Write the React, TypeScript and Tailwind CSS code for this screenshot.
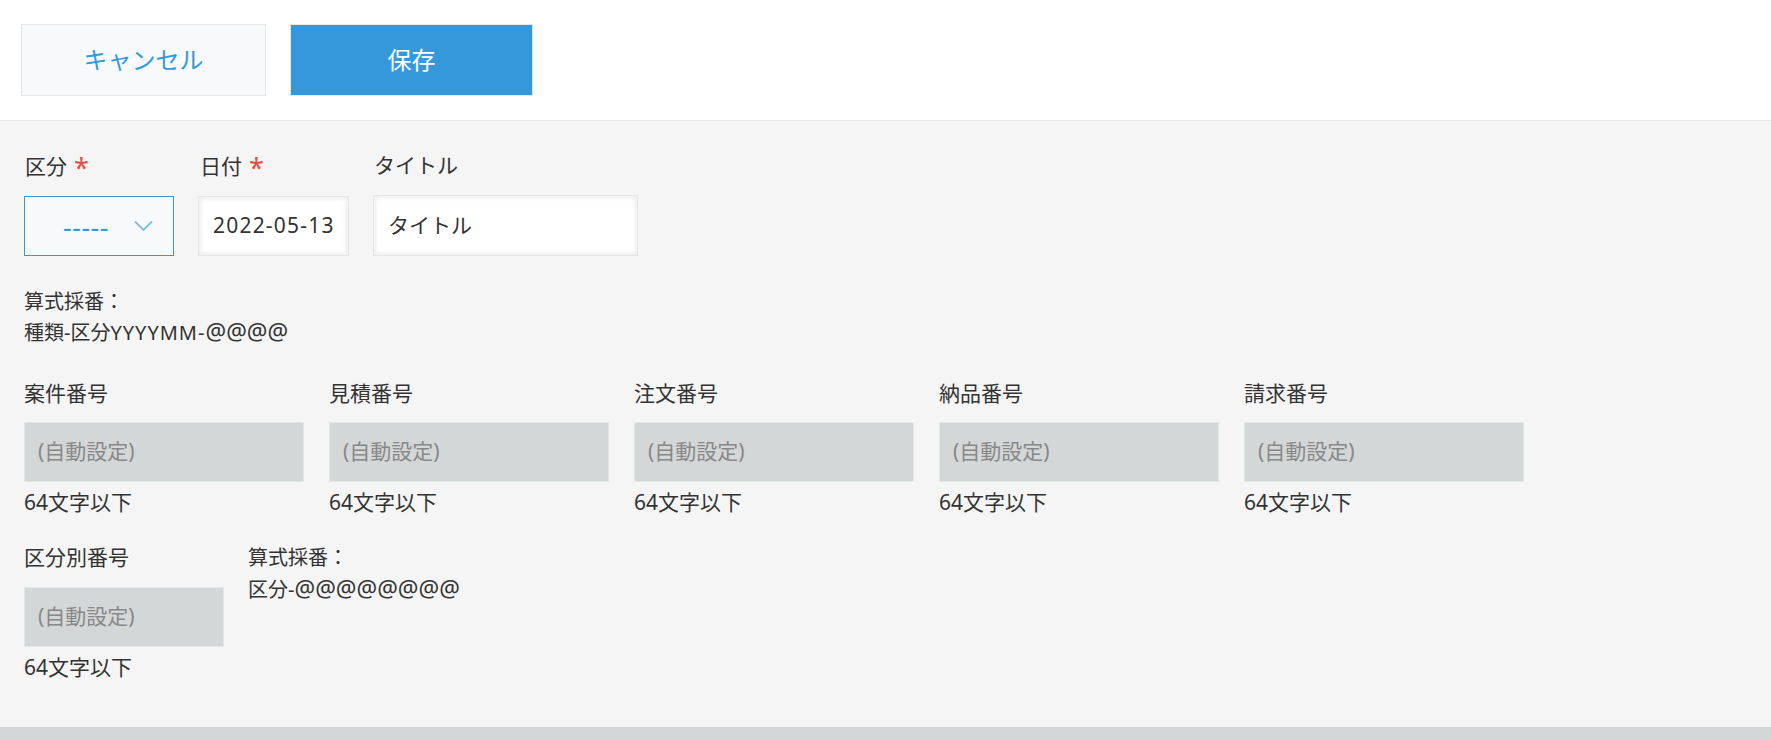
import React from "react";

const font = "font-['Noto_Sans','Noto_Sans_CJK_JP',sans-serif]";

function Required() {
  return <span className="ml-[7px] text-[27px] leading-none text-[#e74c3c] relative top-[4px]">*</span>;
}

function AutoField({ label, width }: { label: string; width: string }) {
  return (
    <div className="flex flex-col">
      <div className="h-[30px] leading-[30px] text-[21px] text-[#333]">{label}</div>
      <div
        className={`mt-[14px] h-[60px] ${width} bg-[#d4d7d7] border border-[#e3e7e8] flex items-center pl-[13px] text-[21px] text-[#888]`}
      >
        (自動設定)
      </div>
      <div className="mt-[5px] h-[30px] leading-[30px] text-[21px] text-[#333]">64文字以下</div>
    </div>
  );
}

export default function App() {
  const numbers = ["案件番号", "見積番号", "注文番号", "納品番号", "請求番号"];

  return (
    <div className={`h-[740px] flex flex-col ${font}`}>
      <header className="h-[121px] bg-white border-b border-[#e3e7e8] flex items-start gap-[24px] pl-[21px] pt-[24px]">
        <button className="w-[245px] h-[72px] bg-[#f7f9fa] border border-[#e3e7e8] text-[24px] text-[#3498db]">
          キャンセル
        </button>
        <button className="w-[243px] h-[72px] bg-[#3498db] border border-[#e3e7e8] text-[24px] text-white">
          保存
        </button>
      </header>

      <main className="flex-1 bg-[#f5f5f5] pl-[24px] pt-[29px] text-[#333]">
        {/* 区分 / 日付 / タイトル */}
        <div className="flex gap-[24px]">
          <div className="flex flex-col">
            <div className="h-[30px] leading-[30px] text-[21px] pl-[1px]">
              区分
              <Required />
            </div>
            <div className="mt-[16px] h-[60px] w-[150px] bg-[#f7f9fa] border border-[#3498db] flex items-center justify-between pl-[38px] pr-[20px]">
              <span className="text-[27px] leading-none text-[#3498db] tracking-[0.5px]">-----</span>
              <svg width="19" height="12" viewBox="0 0 19 12" fill="none">
                <polyline points="1,1.5 9.5,10 18,1.5" stroke="#7bbde8" strokeWidth="1.8" />
              </svg>
            </div>
          </div>

          <div className="flex flex-col">
            <div className="h-[30px] leading-[30px] text-[21px] pl-[2px]">
              日付
              <Required />
            </div>
            <div className="mt-[16px] h-[60px] w-[151px] bg-white border border-[#e3e7e8] shadow-[inset_2px_2px_4px_#efefef,inset_-2px_-2px_4px_#efefef] flex items-center pl-[14px] text-[21px] tracking-[1.2px]">
              2022-05-13
            </div>
          </div>

          <div className="flex flex-col">
            <div className="h-[30px] leading-[30px] text-[21px] pl-[1px]">タイトル</div>
            <div className="mt-[15px] h-[61px] w-[265px] bg-white border border-[#e3e7e8] shadow-[inset_2px_2px_4px_#efefef,inset_-2px_-2px_4px_#efefef] flex items-center pl-[14px] text-[21px]">
              タイトル
            </div>
          </div>
        </div>

        <div className="mt-[30px] text-[20px] leading-[31px]">
          <div>算式採番：</div>
          <div>
            種類-区分<span className="tracking-[1px]">YYYYMM-</span>
            <span className="text-[23px] leading-none">@@@@</span>
          </div>
        </div>

        <div className="mt-[30px] flex gap-[25px]">
          {numbers.map((n) => (
            <AutoField key={n} label={n} width="w-[280px]" />
          ))}
        </div>

        <div className="mt-[25px] flex gap-[24px]">
          <div className="flex flex-col">
            <div className="h-[30px] leading-[30px] text-[21px] text-[#333]">区分別番号</div>
            <div className="mt-[15px] h-[60px] w-[200px] bg-[#d4d7d7] border border-[#e3e7e8] flex items-center pl-[13px] text-[21px] text-[#888]">
              (自動設定)
            </div>
            <div className="mt-[5px] h-[30px] leading-[30px] text-[21px] text-[#333]">64文字以下</div>
          </div>
          <div className="text-[20px] leading-[32px]">
            <div>算式採番：</div>
            <div>
              区分-<span className="text-[23px] leading-none">@@@@@@@@</span>
            </div>
          </div>
        </div>
      </main>

      <footer className="h-[13px] bg-[#d4d7d7]" />
    </div>
  );
}
